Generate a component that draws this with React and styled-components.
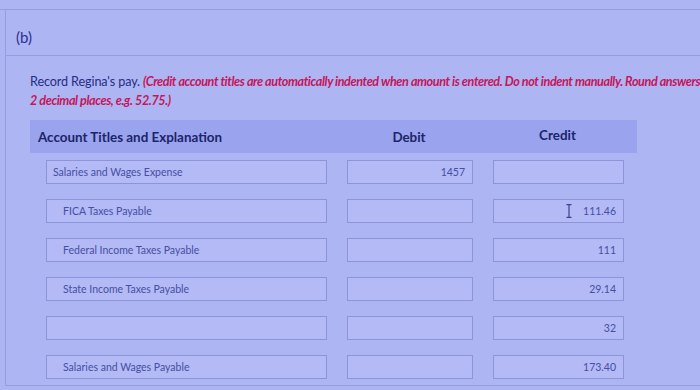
import React from 'react';
import styled, { createGlobalStyle } from 'styled-components';

const GlobalStyle = createGlobalStyle`
  html, body {
    margin: 0;
    padding: 0;
    background: #adb5f3;
    overflow: hidden;
    font-family: Lato, "Open Sans", sans-serif;
  }
`;

const Page = styled.div`
  width: 700px;
  height: 390px;
  overflow: hidden;
  position: relative;
`;

const TopStrip = styled.div`
  height: 9px;
  border-bottom: 1px solid #969ee0;
`;

const PartLabel = styled.div`
  height: 45px;
  margin-left: 5px;
  padding: 8px 0 0 10px;
  border-left: 1px solid #969ee0;
  display: flex;
  align-items: center;
  box-sizing: border-box;
  font-size: 15px;
  color: #2a3190;
`;

const Card = styled.div`
  border-top: 1px solid #969ee0;
  border-left: 1px solid #969ee0;
  border-bottom: 1px solid #969ee0;
  margin-left: 5px;
  padding: 16px 0 6px 24px;
  height: 331px;
  box-sizing: border-box;
`;

const Instructions = styled.p`
  margin: 0;
  width: 740px;
  font-size: 12.6px;
  line-height: 19px;
  color: #262d80;
  letter-spacing: -0.1px;
`;

const Line = styled.span`
  display: block;
  white-space: nowrap;
`;

const Note = styled.span`
  color: #c5155b;
  font-style: italic;
  font-weight: 700;
  letter-spacing: -0.4px;
`;

const HeaderBand = styled.div`
  margin-top: 10px;
  width: 607px;
  height: 33px;
  background: #9aa3ee;
  display: grid;
  grid-template-columns: 288px 126px 131px;
  column-gap: 20px;
  padding-left: 8px;
  box-sizing: border-box;
  align-items: center;
`;

const HeadCell = styled.div`
  font-size: 13.4px;
  font-weight: 700;
  color: #1d2468;
  text-align: ${(p) => (p.$center ? 'center' : 'left')};
  margin-top: ${(p) => p.$lift || 0}px;
`;

const Rows = styled.div`
  margin-top: 7px;
  display: flex;
  flex-direction: column;
  gap: 15px;
  padding-left: 16px;
`;

const Row = styled.div`
  display: grid;
  grid-template-columns: 281px 126px 131px;
  column-gap: 20px;
  height: 24px;
`;

const Field = styled.div`
  position: relative;
  box-sizing: border-box;
  height: 24px;
  border: 1px solid #8c94da;
  background: #b3baf5;
  display: flex;
  align-items: center;
  justify-content: ${(p) => (p.$number ? 'flex-end' : 'flex-start')};
  padding: ${(p) => (p.$number ? '0 7px 0 0' : `0 0 0 ${p.$indent ? 16 : 6}px`)};
  font-size: 10.5px;
  color: #474ea3;
  white-space: nowrap;
`;

const Cursor = styled.svg`
  position: absolute;
  left: 72px;
  top: 4px;
`;

const entries = [
  { account: 'Salaries and Wages Expense', debit: '1457', credit: '' },
  { account: 'FICA Taxes Payable', debit: '', credit: '111.46', cursor: true, indent: true },
  { account: 'Federal Income Taxes Payable', debit: '', credit: '111', indent: true },
  { account: 'State Income Taxes Payable', debit: '', credit: '29.14', indent: true },
  { account: '', debit: '', credit: '32', indent: true },
  { account: 'Salaries and Wages Payable', debit: '', credit: '173.40', indent: true },
];

export default function App() {
  return (
    <Page>
      <GlobalStyle />
      <TopStrip />
      <PartLabel>(b)</PartLabel>
      <Card>
        <Instructions>
          <Line>
            Record Regina's pay.{' '}
            <Note>
              (Credit account titles are automatically indented when amount is entered. Do not indent manually. Round answers to
            </Note>
          </Line>
          <Line>
            <Note>2 decimal places, e.g. 52.75.)</Note>
          </Line>
        </Instructions>
        <HeaderBand>
          <HeadCell>Account Titles and Explanation</HeadCell>
          <HeadCell $center>Debit</HeadCell>
          <HeadCell $center $lift={-4}>Credit</HeadCell>
        </HeaderBand>
        <Rows>
          {entries.map((e, i) => (
            <Row key={i}>
              <Field $indent={e.indent}>{e.account}</Field>
              <Field $number>{e.debit}</Field>
              <Field $number>
                {e.cursor && (
                  <Cursor width="6" height="14" viewBox="0 0 6 14">
                    <path d="M0.5 0.7h5M3 0.7v12.6M0.5 13.3h5" stroke="#3b428f" strokeWidth="1.2" fill="none" />
                  </Cursor>
                )}
                {e.credit}
              </Field>
            </Row>
          ))}
        </Rows>
      </Card>
    </Page>
  );
}
